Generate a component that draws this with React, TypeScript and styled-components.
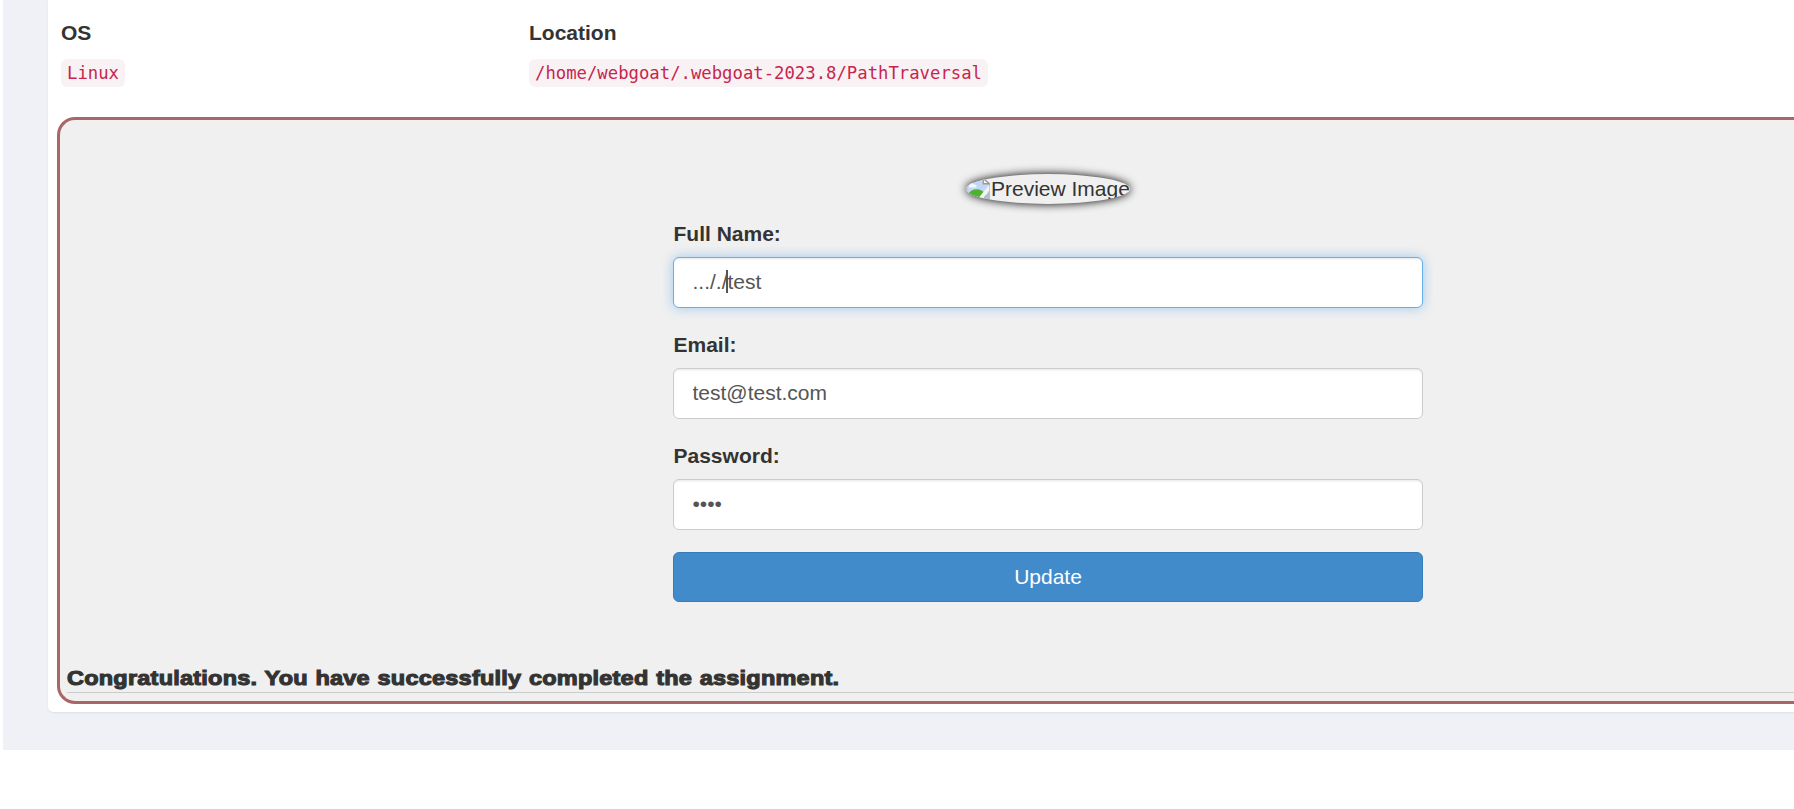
import React from "react";
import styled, { createGlobalStyle, css } from "styled-components";

const GlobalStyle = createGlobalStyle`
  * { box-sizing: border-box; }
  body {
    margin: 0;
    background: #fff;
    color: #333;
    font: 21px/30px "Liberation Sans", Arial, sans-serif;
    overflow: hidden;
  }
`;

const Page = styled.div`
  height: 809px;
  padding-left: 3px;
`;

const Main = styled.main`
  height: 750px;
  padding: 0 0 38px 45px;
  background: #f0f1f7;
`;

const Panel = styled.section`
  height: 712px;
  padding: 18px 0 0 9px;
  background: #fff;
  border-bottom-left-radius: 5px;
  box-shadow: 0 1px 2px rgba(0, 0, 0, 0.08);
`;

const Details = styled.div`
  display: grid;
  grid-template-columns: 468px 1fr;
  height: 99px;
  padding-left: 4px;
`;

const Detail = styled.div`
  display: flex;
  flex-direction: column;
  align-items: flex-start;
  gap: 11px;
`;

const Label = styled.label`
  display: block;
  font-weight: 700;
`;

const Code = styled.code`
  height: 28px;
  padding: 0 6px;
  border-radius: 6px;
  background: #f9f2f4;
  color: #c7254e;
  font: 17.27px/28px Consolas, "DejaVu Sans Mono", monospace;
`;

const Assignment = styled.div`
  height: 587px;
  padding: 54px 0 0 7px;
  border: 3px solid #a66;
  border-right: 0;
  border-radius: 18px 0 0 18px;
  background: #f0f0f0;
`;

const Form = styled.form`
  display: flex;
  flex-direction: column;
  width: 750px;
  height: 486px;
  margin-left: 606px;
`;

const Preview = styled.div`
  display: flex;
  align-self: center;
  width: 164px;
  height: 30px;
  border-radius: 50%;
  overflow: hidden;
  box-shadow: 0 0 10px #000;
  white-space: nowrap;
`;

const BrokenIcon = styled.svg`
  flex: none;
  width: 24px;
  height: 24px;
  margin: 3px 1px 0 0;
`;

const Groups = styled.div`
  margin-top: 15px;
`;

const Group = styled.div`
  height: 111px;

  ${Label} { padding-left: 0.5px; }
`;

const Control = styled.div`
  position: relative;
  margin-top: 8px;
`;

const Input = styled.input<{ $active?: boolean }>`
  display: block;
  width: 100%;
  height: 51px;
  padding: 9px 18px 10px 18.5px;
  border: 1px solid #ccc;
  border-radius: 6px;
  outline: 0;
  background: #fff;
  color: #555;
  font: inherit;
  box-shadow: inset 0 1.5px 1.5px rgba(0, 0, 0, 0.075);
  ${({ $active }) =>
    $active &&
    css`
      border-color: #66afe9;
      box-shadow: inset 0 1.5px 1.5px rgba(0, 0, 0, 0.075), 0 0 12px rgba(102, 175, 233, 0.6);
    `}
`;

const Caret = styled.span`
  position: absolute;
  left: 53px;
  top: 13px;
  width: 2px;
  height: 23px;
  background: #555;
`;

const Submit = styled.button`
  flex: none;
  height: 50px;
  padding: 0;
  border: 1px solid #357ebd;
  border-radius: 6px;
  background: #428bca;
  color: #fff;
  font: inherit;
`;

const Feedback = styled.div`
  height: 33px;
  border-bottom: 1px solid #ccc;
  white-space: nowrap;
`;

const FeedbackText = styled.span`
  display: inline-block;
  font-weight: 700;
  line-height: 36px;
  letter-spacing: 0.2px;
  word-spacing: 0.8px;
  transform: scaleX(1.119);
  transform-origin: left;
  -webkit-text-stroke: 1.1px #333;
`;

export default function App() {
  return (
    <Page>
      <GlobalStyle />
      <Main>
        <Panel>
          <Details>
            <Detail>
              <Label as="span">OS</Label>
              <Code>Linux</Code>
            </Detail>
            <Detail>
              <Label as="span">Location</Label>
              <Code>/home/webgoat/.webgoat-2023.8/PathTraversal</Code>
            </Detail>
          </Details>
          <Assignment>
            <Form>
              <Preview>
                <BrokenIcon viewBox="0 0 16 16">
                  <path d="M.5 1h11l4 3.500V14.500H.5z" fill="#c3d6f6" stroke="#b0b4bb" strokeWidth=".8" />
                  <path d="M2 6c0-2 2.500-2.500 3.500-1C7.500 5 7.500 7 6 7H2z" fill="#f4f8ff" />
                  <path d="M1 14.500V12C3.500 6.800 10.500 6.800 13.500 12v2.500z" fill="#4fb22e" />
                  <path d="M11.500 1v3.500h4z" fill="#fff" stroke="#9a9a9a" strokeWidth=".9" />
                  <path d="M7.500 15 15.500 5.200V9L11 15z" fill="#f4f4f4" />
                  <path d="M15.500 9.500v5H11.500z" fill="#b4bfca" />
                </BrokenIcon>
                <span>Preview Image</span>
              </Preview>
              <Groups>
                <Group>
                  <Label htmlFor="name">Full Name:</Label>
                  <Control>
                    <Input id="name" $active defaultValue="..././test" />
                    <Caret />
                  </Control>
                </Group>
                <Group>
                  <Label htmlFor="email">Email:</Label>
                  <Control>
                    <Input id="email" defaultValue="test@test.com" />
                  </Control>
                </Group>
                <Group>
                  <Label htmlFor="password">Password:</Label>
                  <Control>
                    <Input id="password" type="password" defaultValue="test" />
                  </Control>
                </Group>
              </Groups>
              <Submit type="button">Update</Submit>
            </Form>
            <Feedback>
              <FeedbackText>Congratulations. You have successfully completed the assignment.</FeedbackText>
            </Feedback>
          </Assignment>
        </Panel>
      </Main>
    </Page>
  );
}
